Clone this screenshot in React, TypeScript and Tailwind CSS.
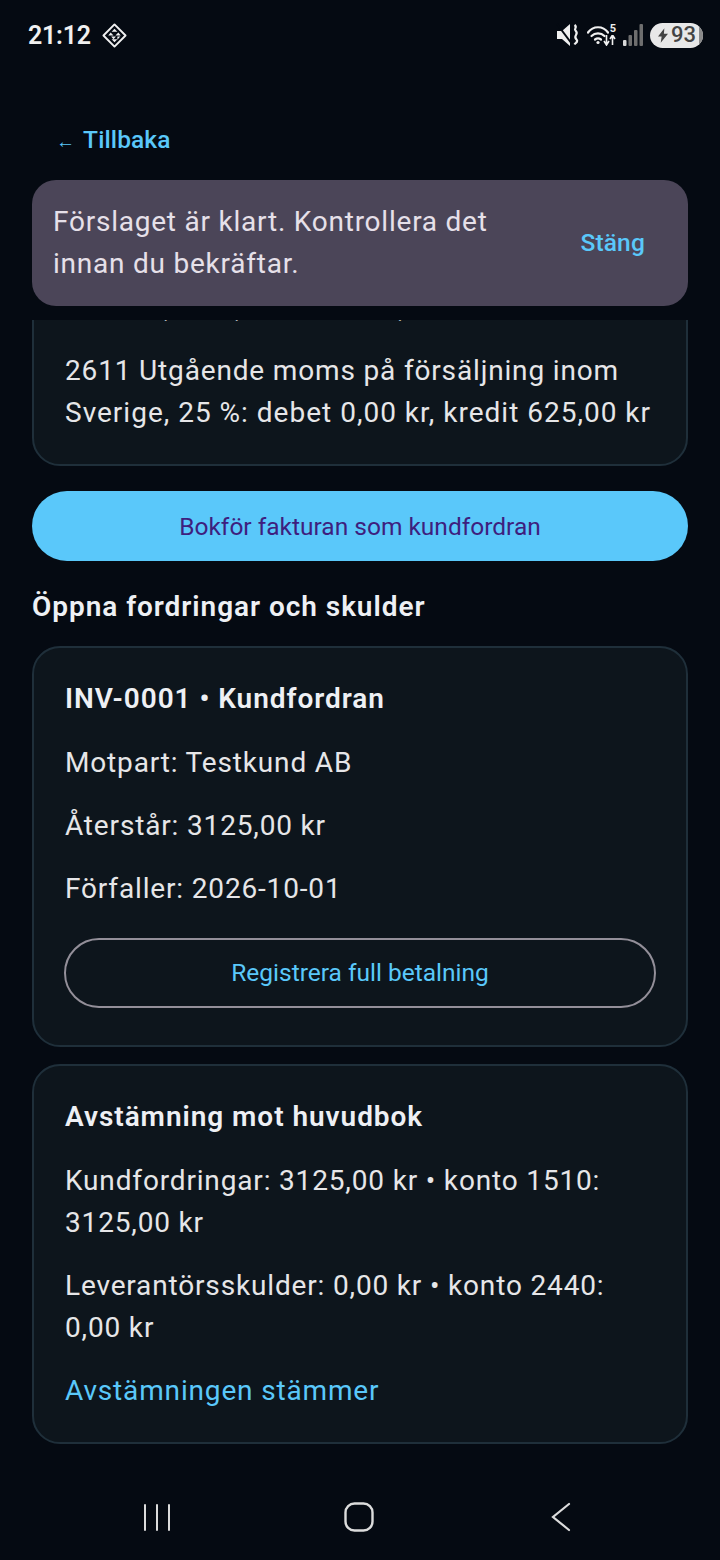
import React from 'react';

const StatusBar = () => (
  <div className="flex h-[70px] items-center justify-between pr-[17px] pl-[28px]">
    <div className="flex items-center gap-[11px]">
      <span className="font-['Roboto',sans-serif] text-[25px] leading-none font-semibold tracking-[-0.25px] text-[#f0f0f0]">21:12</span>
      <svg width="25" height="25" viewBox="0 0 26 26" fill="none">
        <path d="M13 1.500 24.500 13 13 24.500 1.500 13Z" stroke="#f0f0f0" strokeWidth="2" strokeLinejoin="round" />
        <path d="M13 6l3 3h-6zM9 10l3 3H6.500zM17 10l2.500 3H14zM9.500 14h5L12 17zM16 14h3l-3 3.500zM13 20l-3-3h6z" fill="#f0f0f0" />
      </svg>
    </div>
    <div className="flex items-center">
      <svg width="24" height="24" viewBox="0 0 24 24">
        <path d="M1 8h5l8-7v22l-8-7H1z" fill="#f0f0f0" />
        <path d="M1 1l15 20" stroke="#050a12" strokeWidth="2" />
        <path d="M18.500 2c3.500 2.500-1 3.500 1 5.500s1.500 3 .5 4.500-1.500 2.500.5 4.500-1 3.500-2 5" stroke="#f0f0f0" strokeWidth="2.200" fill="none" />
      </svg>
      <svg width="22" height="22" viewBox="0 0 22 22" fill="none" stroke="#f0f0f0" strokeWidth="2.200" strokeLinecap="round" className="ml-[7px]">
        <path d="M1 8.500C6 1.500 16 1.500 21 8.500" />
        <path d="M4.500 12C8 8.500 14 8.500 17.500 12" />
        <path d="M8 15.500c2-1.500 4-1.500 6 0" />
        <circle cx="11" cy="18.500" r="1.600" fill="#f0f0f0" stroke="none" />
      </svg>
      <div className="-ml-[6px] flex w-[13px] flex-col items-end">
        <span className="font-['Roboto',sans-serif] text-[11px] leading-[10px] font-bold text-[#f0f0f0]">5</span>
        <svg width="13" height="11" viewBox="0 0 13 11" fill="none" stroke="#f0f0f0" strokeWidth="1.600" className="mt-[1px]">
          <path d="M3.500 0v9M1 6l2.500 4L6 6M9.500 10V1M7 4l2.500-4L12 4" />
        </svg>
      </div>
      <svg width="20" height="22" viewBox="0 0 20 22" className="ml-[7px]" fill="#6e6e6e">
        <rect x="0" y="16" width="3.500" height="6" rx="1" fill="#d8d8d8" />
        <rect x="5.500" y="11" width="3.500" height="11" rx="1" />
        <rect x="11" y="6" width="3.500" height="16" rx="1" />
        <rect x="16.500" y="0" width="3.500" height="22" rx="1" />
      </svg>
      <div className="relative ml-[7px] flex h-[25px] w-[53px] items-center overflow-hidden rounded-full bg-[#e8e8e8] pl-[8px]">
        <svg width="10" height="15" viewBox="0 0 11 16" fill="#444444"><path d="M7 0 0 9h4l-1 7 8-10H6.500z" /></svg>
        <span className="ml-[3px] font-['Roboto',sans-serif] text-[22px] leading-none font-medium text-[#444444]">93</span>
        <div className="absolute top-0 right-0 h-full w-[4px] bg-[#8a8a8a]" />
      </div>
    </div>
  </div>
);

const NavBar = () => (
  <div className="flex h-[80px] items-center pb-[7px] pl-[144px]">
    <svg width="28" height="28" viewBox="0 0 28 28" stroke="#dcdcdc" strokeWidth="2" strokeLinecap="round">
      <path d="M1 2v25M13 2v25M25 2v25" />
    </svg>
    <svg width="30" height="30" viewBox="0 0 30 30" fill="none" stroke="#dcdcdc" strokeWidth="2.400" className="ml-[172px]">
      <rect x="1.500" y="1.500" width="27" height="27" rx="9" />
    </svg>
    <svg width="20" height="30" viewBox="0 0 20 30" fill="none" stroke="#dcdcdc" strokeWidth="2.200" strokeLinecap="round" className="ml-[177px]">
      <path d="M18 2 2 15l16 13" />
    </svg>
  </div>
);

const Card = ({ children, className = '' }: { children: React.ReactNode; className?: string }) => (
  <div className={`flex flex-col gap-[21px] rounded-[28px] border-2 border-[#1f2f3a] bg-[#0d151c] px-[30px] pt-[31px] pb-[30px] ${className}`}>
    {children}
  </div>
);

const Line = ({ children, color = 'text-[#e6e6e8]' }: { children: React.ReactNode; color?: string }) => (
  <p className={`pl-[1px] text-[28px] leading-[42px] tracking-[0.84px] ${color}`}>{children}</p>
);

const Title = ({ children }: { children: React.ReactNode }) => (
  <h3 className="-mt-[1px] mb-[1px] pl-[1px] text-[28px] leading-[42px] font-semibold tracking-[0.95px] text-[#eef0f4]">{children}</h3>
);

export default function App() {
  return (
    <div className="flex h-[1560px] w-[720px] flex-col overflow-hidden bg-[#050a12] font-['Roboto',sans-serif]">
      <StatusBar />
      <div className="mx-[32px] flex flex-1 flex-col overflow-hidden">
        <div className="mt-[49px] ml-[24px] flex h-[42px] items-center gap-[8px] text-[24.500px] font-medium tracking-[0.1px] text-[#5ac8fa]">
          <span className="mt-[4px] font-['Liberation_Sans',sans-serif] text-[19px] font-normal">←</span>
          <span>Tillbaka</span>
        </div>
        <div className="mt-[19px] flex h-[126px] items-center justify-between rounded-[24px] bg-[#4b4558] pr-[43px] pl-[21px]">
          <p className="w-[470px] text-[28px] leading-[42px] tracking-[0.77px] text-[#e6e0e9]">
            Förslaget är klart. Kontrollera det innan du bekräftar.
          </p>
          <span className="text-[24.500px] font-medium tracking-[0.175px] text-[#5ac8fa]">Stäng</span>
        </div>
        <div className="mt-[14px] flex flex-col overflow-hidden">
          <Card className="-mt-[66px] shrink-0">
            <Line>debet 0,00 kr, kredit 2500,00 kr</Line>
            <Line>
              2611 Utgående moms på försäljning inom <span className="tracking-[1px]">Sverige, 25 %: debet 0,00 kr, kredit 625,00 kr</span>
            </Line>
          </Card>
          <button className="mt-[25px] h-[70px] shrink-0 rounded-full bg-[#5ac8fa] pt-[2px] text-[24.500px] font-[450] tracking-[0px] text-[#3e1f7e]">
            Bokför fakturan som kundfordran
          </button>
          <h2 className="mt-[25px] text-[28px] leading-[42px] font-semibold tracking-[0.95px] text-[#eef0f4]">Öppna fordringar och skulder</h2>
          <Card className="mt-[18px] shrink-0">
            <Title>INV-0001 • Kundfordran</Title>
            <Line>Motpart: Testkund AB</Line>
            <Line>Återstår: 3125,00 kr</Line>
            <Line>Förfaller: 2026-10-01</Line>
            <div className="flex h-[84px] items-center">
              <button className="-mt-[1px] h-[70px] w-full rounded-full border-2 border-[#938f99] pt-[1px] text-[24.500px] font-[450] tracking-[0px] text-[#5ac8fa]">
                Registrera full betalning
              </button>
            </div>
          </Card>
          <Card className="mt-[17px] shrink-0">
            <Title>Avstämning mot huvudbok</Title>
            <Line>Kundfordringar: 3125,00 kr • konto 1510: 3125,00 kr</Line>
            <Line>Leverantörsskulder: 0,00 kr • konto 2440: 0,00 kr</Line>
            <Line color="text-[#5ac8fa]">Avstämningen stämmer</Line>
          </Card>
        </div>
      </div>
      <NavBar />
    </div>
  );
}
